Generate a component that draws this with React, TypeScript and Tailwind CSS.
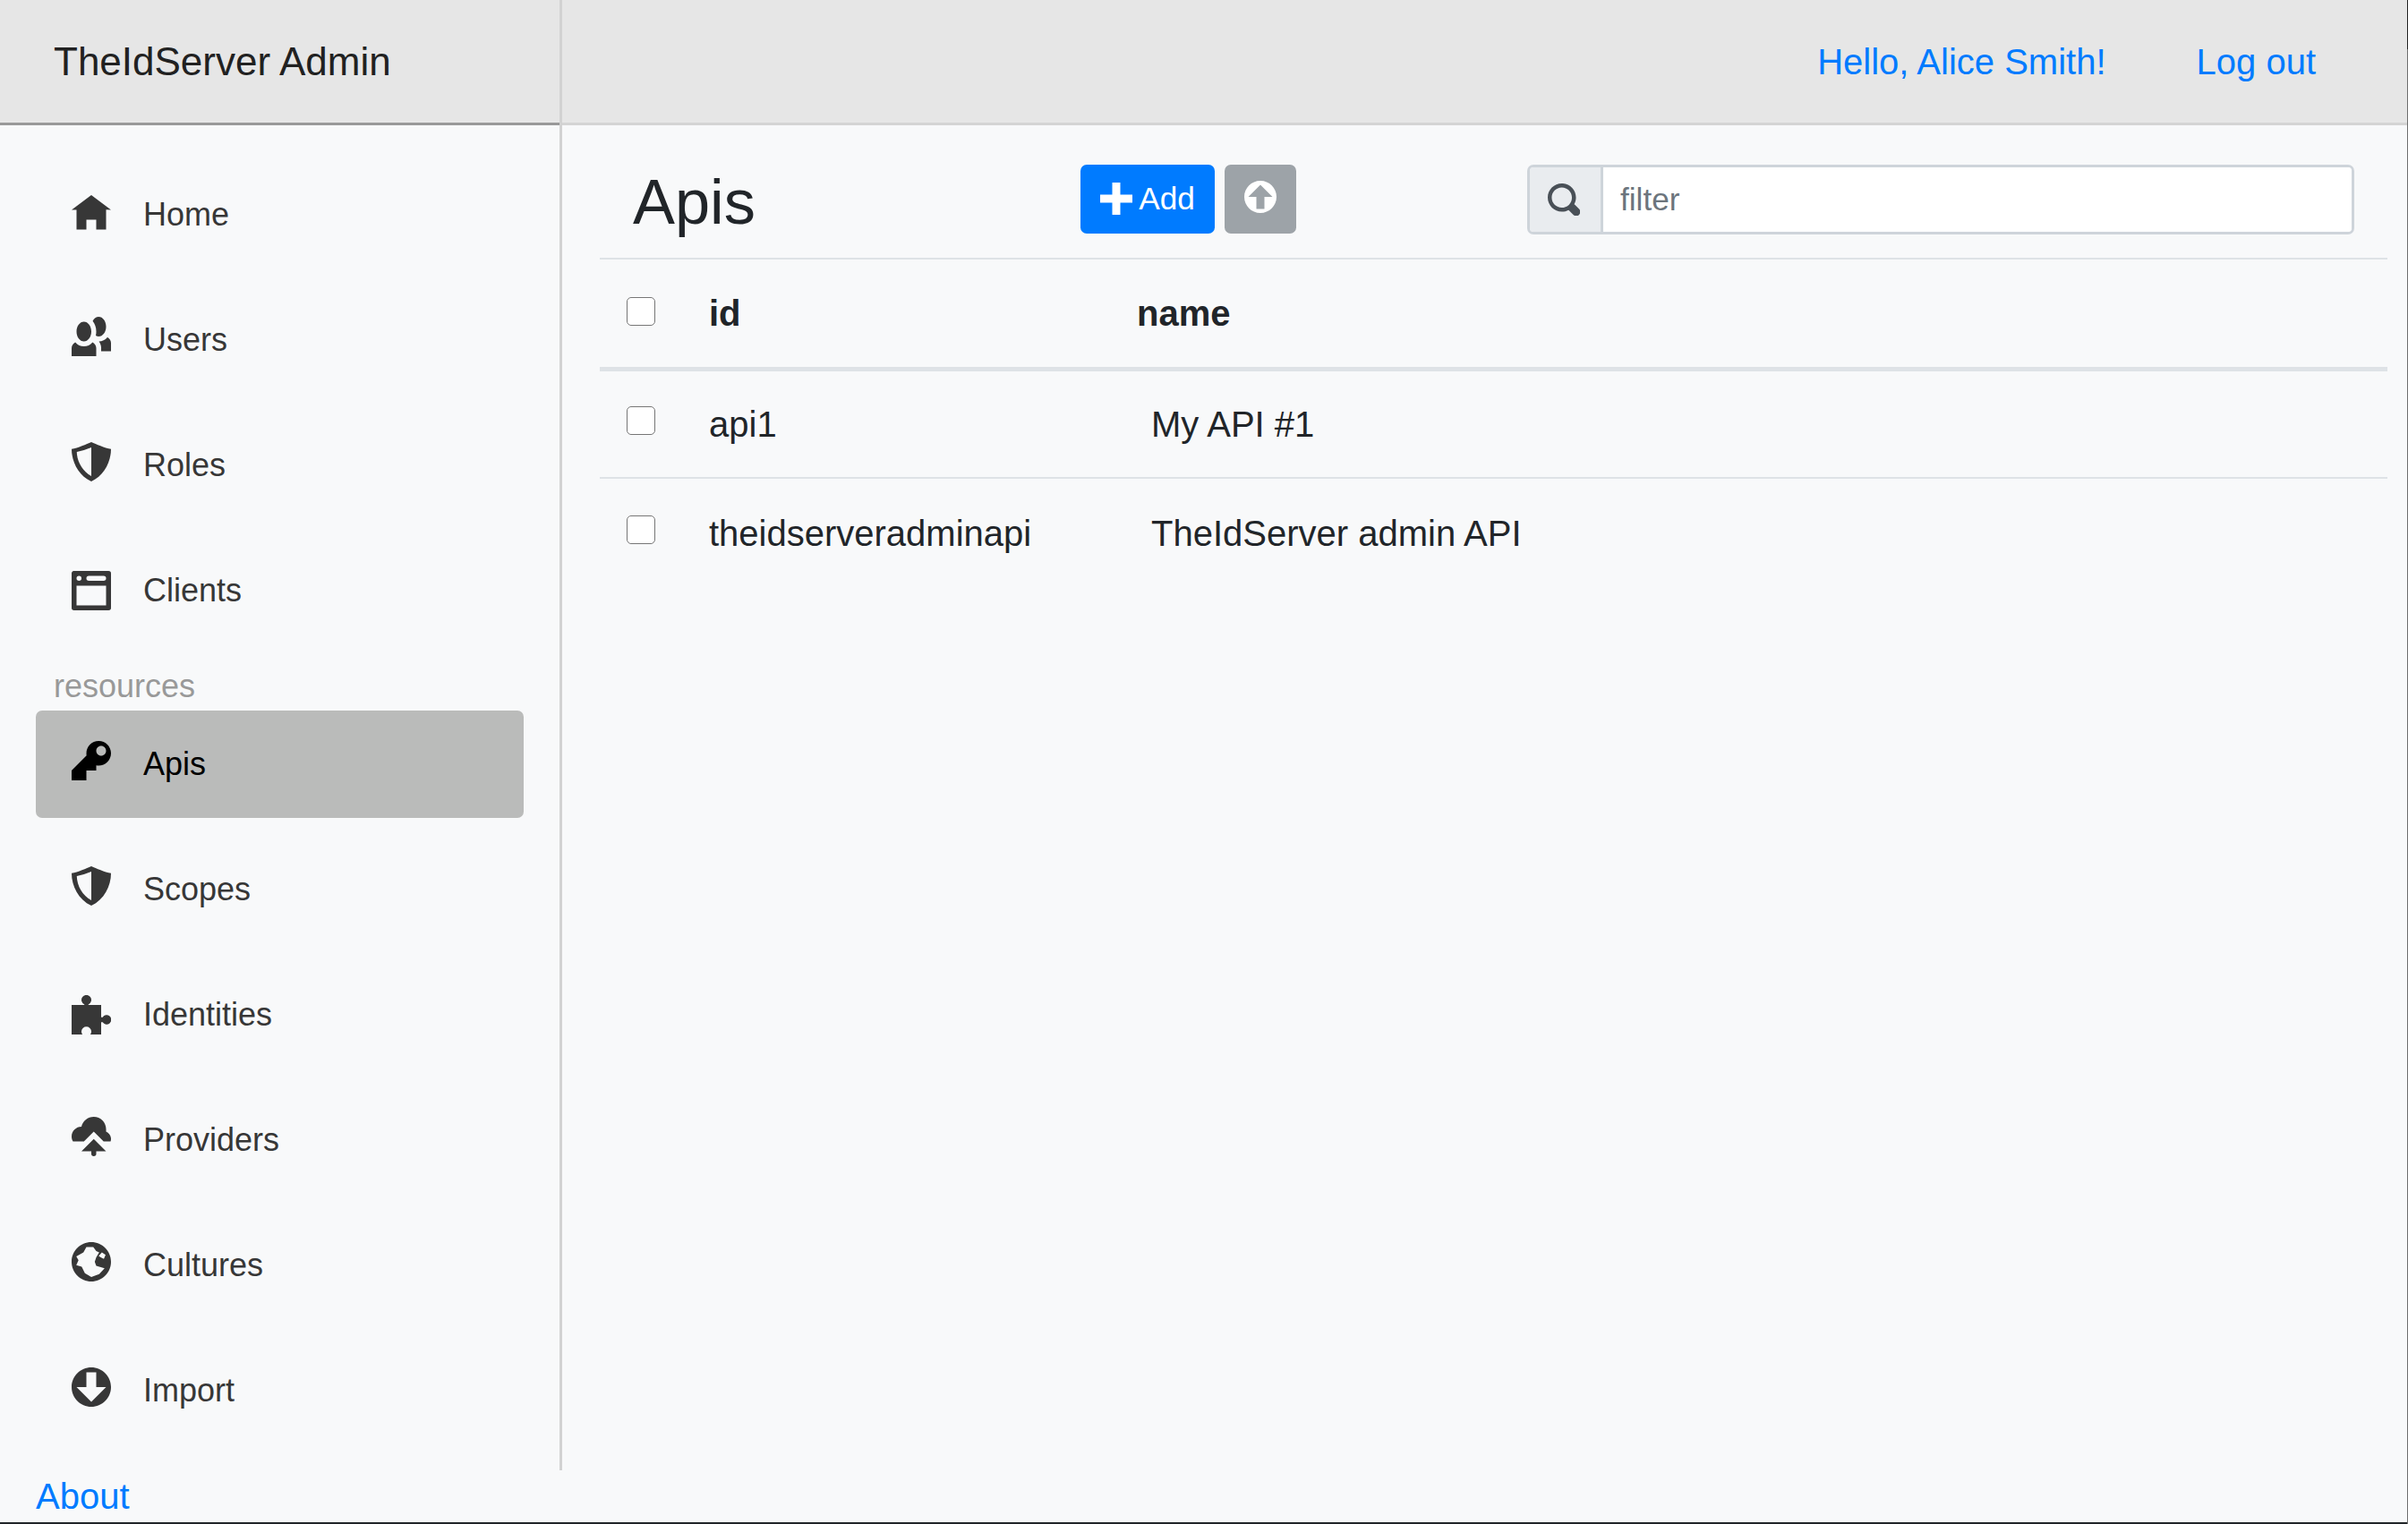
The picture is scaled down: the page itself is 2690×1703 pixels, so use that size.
import React from 'react';

type IconProps = { d: string; className?: string };

const Icon: React.FC<IconProps> = ({ d, className = '' }) => (
    <svg viewBox="0 0 8 8" className={`shrink-0 fill-current ${className}`}>
        <path fillRule="evenodd" d={d} />
    </svg>
);

const paths = {
    home: 'M4 0l-4 3h1v4h2v-2h2v2h2v-4.03l1 .03-4-3z',
    users: 'M5.5 0c-.51 0-.95.35-1.22.88.45.54.72 1.28.72 2.13 0 .29-.03.55-.09.81.19.11.38.19.59.19.83 0 1.5-.9 1.5-2s-.67-2-1.5-2zm-3 1c-.83 0-1.5.9-1.5 2s.67 2 1.5 2 1.5-.9 1.5-2-.67-2-1.5-2zm4.75 3.16c-.43.51-1.02.82-1.69.84.27.38.44.84.44 1.34v.66h2v-1.66c0-.52-.31-.97-.75-1.19zm-6.5 1c-.44.22-.75.67-.75 1.19v1.66h5v-1.66c0-.52-.31-.97-.75-1.19-.45.53-1.06.84-1.75.84s-1.3-.32-1.75-.84z',
    shield: 'M4 0C3 .45 1.3 1.2 0 1.4 0 4 1.4 6.8 4 8 6.6 6.8 8 4 8 1.4 6.7 1.2 5 .45 4 0zM4 1.1C3 1.5 2 1.8 1.05 2 1.1 4 2.2 5.9 4 6.9z',
    browser: 'M.34 0a.5.5 0 0 0-.34.5v7a.5.5 0 0 0 .5.5h7a.5.5 0 0 0 .5-.5v-7a.5.5 0 0 0-.5-.5h-7a.5.5 0 0 0-.09 0 .5.5 0 0 0-.06 0zm1.16 1a.5.5 0 1 1 0 1 .5.5 0 0 1 0-1zm2 0h3a.5.5 0 1 1 0 1h-3a.5.5 0 1 1 0-1zm-2.5 2h6v4h-6v-4z',
    key: 'M5.5 0c-1.38 0-2.5 1.12-2.5 2.5 0 .16 0 .32.03.47l-3.03 3.03v2h3v-2h2v-1l.03-.03c.15.03.31.03.47.03 1.38 0 2.5-1.12 2.5-2.5s-1.12-2.5-2.5-2.5zm.5 1c.55 0 1 .45 1 1s-.45 1-1 1-1-.45-1-1 .45-1 1-1z',
    puzzle: 'M0 2H2.6V1.9A1 1 0 1 1 3.4 1.9V2H6V4.5H6.3A.95.95 0 1 1 6.3 5.5H6V8H3.8A1 1 0 1 0 2.2 8H0Z',
    cloud: 'M4.5 0c-1.21 0-2.27.86-2.5 2-1.1 0-2 .9-2 2 0 .37.11.71.28 1h2.22l2-2 2 2h1.41c.06-.16.09-.32.09-.5 0-.65-.42-1.29-1-1.5v-.5c0-1.38-1.12-2.5-2.5-2.5zm0 4.5l-2.5 2.5h2v.5a.5.5 0 1 0 1 0v-.5h2l-2.5-2.5z',
    globe: 'M4 0c-2.2 0-4 1.8-4 4s1.8 4 4 4 4-1.8 4-4-1.8-4-4-4zM.95 2.9L2.4 2.1 3 1H4.4L5 1.8 5.6 2.1 5 3.1 4.7 4 5 4.8 6.7 5.3 5.6 6.5 4 7.1 2.7 6.3 2.05 5 .95 4.7 1.4 3.7zM5.5 2.8L6.15 2.1 6.9 2.6 6.55 3.4 5.9 3.1z',
    down: 'M4 0c-2.21 0-4 1.79-4 4s1.79 4 4 4 4-1.79 4-4-1.79-4-4-4zm-1 1h2v3h2l-3 3-3-3h2v-3z',
    up: 'M4 0c-2.21 0-4 1.79-4 4s1.79 4 4 4 4-1.79 4-4-1.79-4-4-4zm0 1l3 3h-2v3h-2v-3h-2l3-3z',
    plus: 'M3 0v3h-3v2h3v3h2v-3h3v-2h-3v-3h-2z',
    search: 'M3.5 0c-1.93 0-3.5 1.57-3.5 3.5s1.57 3.5 3.5 3.5c.59 0 1.17-.14 1.66-.41a1 1 0 0 0 .13.13l1 1a1.02 1.02 0 1 0 1.44-1.44l-1-1a1 1 0 0 0-.16-.13c.27-.49.44-1.06.44-1.66 0-1.93-1.57-3.5-3.5-3.5zm0 1c1.39 0 2.5 1.11 2.5 2.5 0 .66-.24 1.27-.66 1.72-.01.01-.02.02-.03.03a1 1 0 0 0-.13.13c-.44.4-1.04.63-1.69.63-1.39 0-2.5-1.11-2.5-2.5s1.11-2.5 2.5-2.5z',
};

const NavItem: React.FC<{ icon: string; label: string; active?: boolean; raised?: boolean }> = ({ icon, label, active, raised }) => (
    <a
        className={`flex h-[120px] items-center gap-[36px] rounded-[7px] pl-[40px] ${
            active ? 'bg-[#babbba] text-black' : 'text-[#373737]'
        }`}
    >
        <Icon d={icon} className={`h-[44px] w-[44px] ${raised ? 'mb-[8px]' : ''}`} />
        <span>{label}</span>
    </a>
);

const Checkbox: React.FC = () => (
    <input type="checkbox" className="h-[32px] w-[32px] appearance-none rounded-[5px] border border-[#767676] bg-white" />
);

const TableRow: React.FC<{ id: string; name: string; className: string }> = ({ id, name, className }) => (
    <div className={`flex items-center pl-[30px] ${className}`}>
        <div className="mb-[8px] flex w-[92px]">
            <Checkbox />
        </div>
        <div className="w-[494px]">{id}</div>
        <div>{name}</div>
    </div>
);

const App: React.FC = () => {
    return (
        <div className="relative h-[1703px] w-full overflow-hidden bg-[#f8f9fa] font-['Liberation_Sans',Arial,sans-serif] text-[40px] text-[#212529]">
            <div className="flex h-[1643px]">
                {/* Sidebar */}
                <aside className="w-[628px] shrink-0 border-r-[3px] border-[#d2d2d2]">
                    <div className="flex h-[140px] items-center border-b-[3px] border-[#999999] bg-[#e6e6e6] pl-[60px] text-[44px] text-[#212121]">
                        TheIdServer Admin
                    </div>
                    <nav className="flex flex-col gap-[20px] pl-[40px] pr-[40px] pt-[40px] text-[36px]">
                        <NavItem icon={paths.home} label="Home" />
                        <NavItem icon={paths.users} label="Users" raised />
                        <NavItem icon={paths.shield} label="Roles" raised />
                        <NavItem icon={paths.browser} label="Clients" />
                        <div className="-mb-[20px] h-[54px] pl-[20px] leading-[54px] text-[#999999]">resources</div>
                        <NavItem icon={paths.key} label="Apis" active raised />
                        <NavItem icon={paths.shield} label="Scopes" raised />
                        <NavItem icon={paths.puzzle} label="Identities" />
                        <NavItem icon={paths.cloud} label="Providers" raised />
                        <NavItem icon={paths.globe} label="Cultures" raised />
                        <NavItem icon={paths.down} label="Import" raised />
                    </nav>
                </aside>

                {/* Main column */}
                <main className="min-w-0 flex-1">
                    <header className="flex h-[140px] items-center justify-end gap-[101px] border-b-[3px] border-[#d4d4d4] bg-[#e6e6e6] pr-[103px] text-[#007bff]">
                        <a>Hello, Alice Smith!</a>
                        <a>Log out</a>
                    </header>

                    <div className="pl-[42px] pr-[23px]">
                        <div className="flex h-[150px] items-start border-b-2 border-[#dee2e6] pl-[37px] pr-[37px] pt-[44px] text-[35.2px]">
                            <h1 className="w-[500px] text-[70.4px] leading-[84px]">Apis</h1>
                            <div className="flex gap-[11px]">
                                <button className="flex h-[77px] w-[150px] items-center justify-center gap-[7px] rounded-[7px] bg-[#007bff] text-white">
                                    <Icon d={paths.plus} className="mb-[2px] h-[36px] w-[36px]" />
                                    Add
                                </button>
                                <button className="flex h-[77px] w-[80px] items-center justify-center rounded-[7px] bg-[#9da3a8] text-white">
                                    <Icon d={paths.up} className="mb-[6px] h-[36px] w-[36px]" />
                                </button>
                            </div>
                            <div className="ml-auto flex h-[78px] w-[924px] overflow-hidden rounded-[7px] border-[3px] border-[#ced4da]">
                                <div className="flex w-[82px] shrink-0 items-center justify-center border-r-[3px] border-[#ced4da] bg-[#e9ecef] pr-[3px] text-[#495057]">
                                    <Icon d={paths.search} className="h-[36px] w-[36px]" />
                                </div>
                                <input
                                    placeholder="filter"
                                    className="min-w-0 flex-1 bg-white pl-[19px] outline-none placeholder:text-[#6c757d]"
                                />
                            </div>
                        </div>

                        <div className="flex h-[125px] items-center border-b-[5px] border-[#dee2e6] pl-[30px] font-bold">
                            <div className="mb-[5px] flex w-[92px]">
                                <Checkbox />
                            </div>
                            <div className="w-[478px]">id</div>
                            <div>name</div>
                        </div>
                        <TableRow id="api1" name="My API #1" className="h-[120px] border-b-2 border-[#dee2e6]" />
                        <TableRow id="theidserveradminapi" name="TheIdServer admin API" className="h-[122px]" />
                    </div>
                </main>
            </div>

            <footer className="flex h-[60px] items-center border-b-2 border-[#212529] pl-[40px] text-[#007bff]">
                <a>About</a>
            </footer>

            {/* window edge */}
            <div className="absolute right-0 top-0 h-[55px] w-px bg-[#222222]" />
            <div className="absolute bottom-0 right-0 top-[55px] w-px bg-[#6e6e6e]" />
        </div>
    );
};

export default App;
